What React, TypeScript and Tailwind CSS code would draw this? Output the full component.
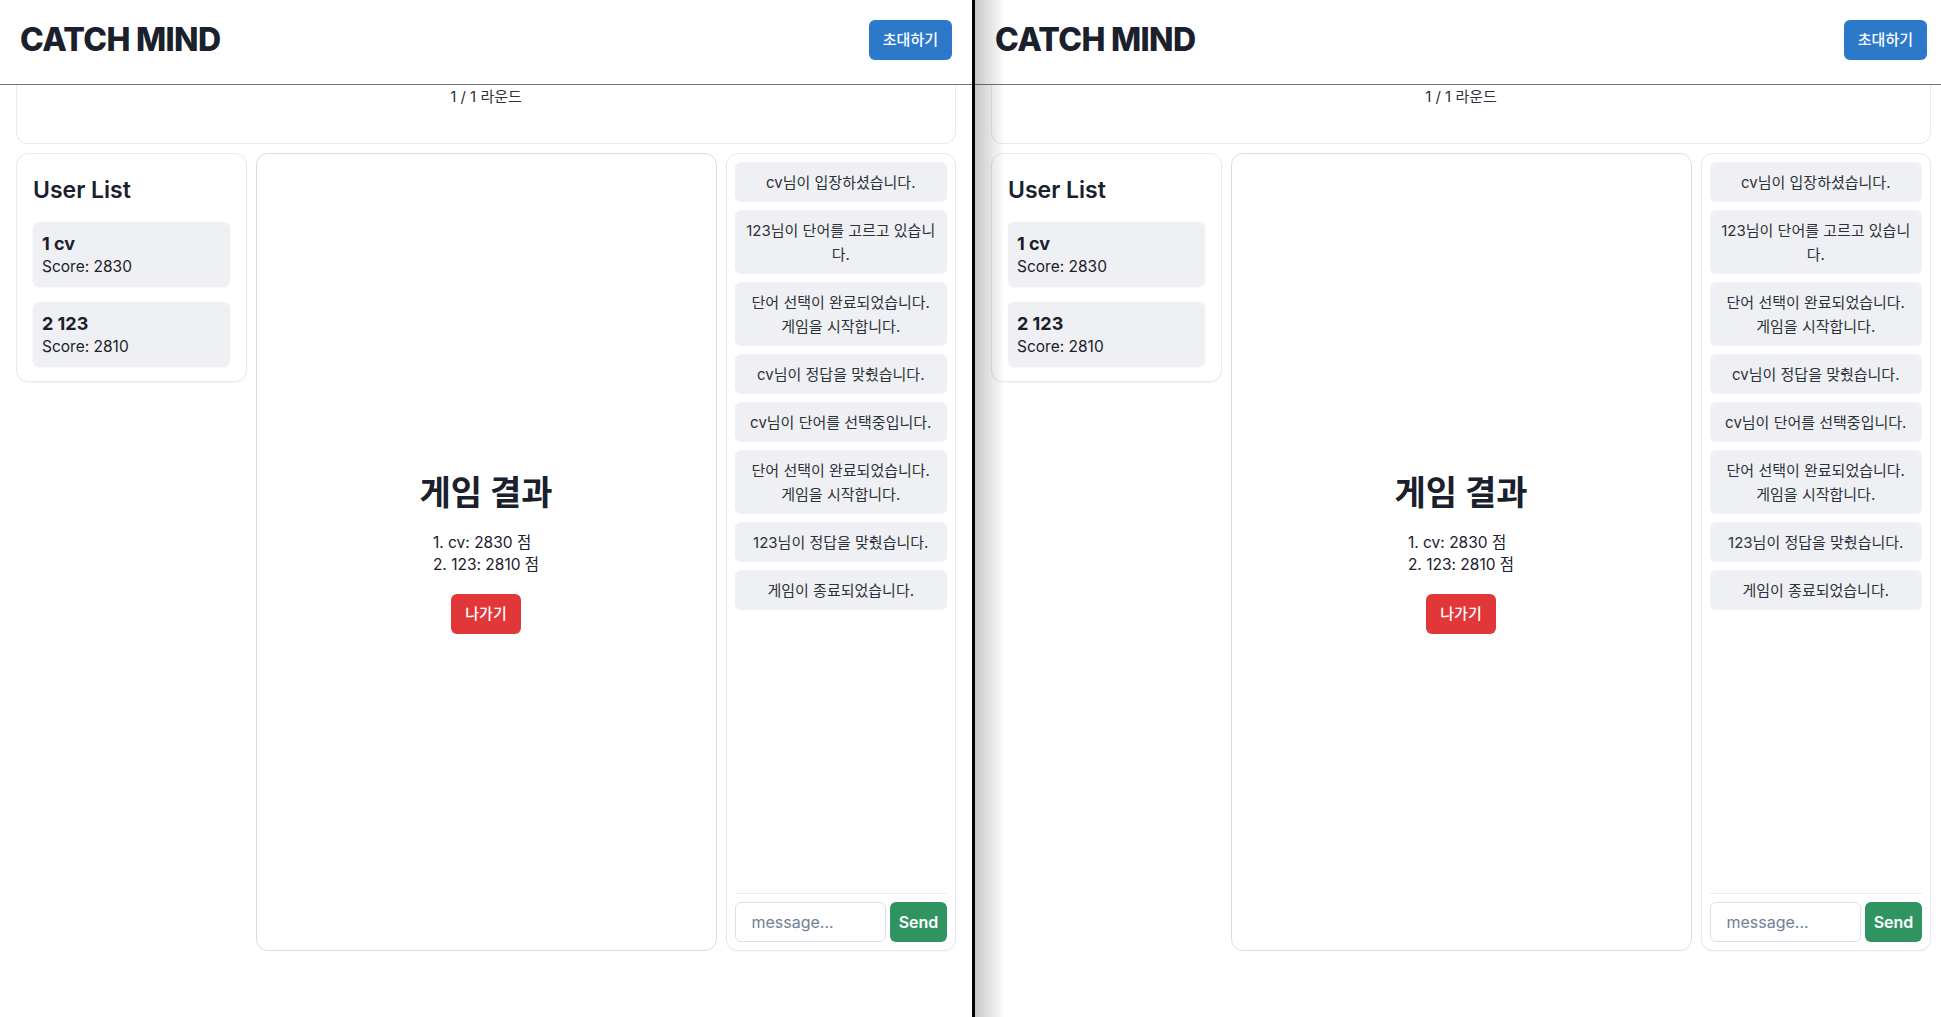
const users = [
  { rank: 1, name: "cv", score: 2830 },
  { rank: 2, name: "123", score: 2810 },
];

const messages = [
  "cv님이 입장하셨습니다.",
  "123님이 단어를 고르고 있습니다.",
  "단어 선택이 완료되었습니다. 게임을 시작합니다.",
  "cv님이 정답을 맞췄습니다.",
  "cv님이 단어를 선택중입니다.",
  "단어 선택이 완료되었습니다. 게임을 시작합니다.",
  "123님이 정답을 맞췄습니다.",
  "게임이 종료되었습니다.",
];

function UserList() {
  return (
    <div className="self-start rounded-xl border border-[#e8e9ee] bg-white px-4 pt-[20px] pb-[15px] shadow-[0_1px_2px_rgba(0,0,0,0.04)]">
      <h2 className="mb-[16px] text-[23px] leading-8 font-semibold text-[#1a202c]">User List</h2>
      <div className="flex flex-col gap-4">
        {users.map((u) => (
          <div
            key={u.rank}
            className="rounded-md bg-[#eff0f3] px-[9px] pt-[11px] pb-[7px] shadow-[0_1px_2px_rgba(0,0,0,0.08)]"
          >
            <p className="text-lg leading-[22px] font-bold text-[#1a202c]">
              {u.rank} {u.name}
            </p>
            <p className="text-[15.5px] leading-6 text-[#1a202c]">Score: {u.score}</p>
          </div>
        ))}
      </div>
    </div>
  );
}

function ResultBoard() {
  return (
    <div className="flex flex-col items-center justify-center rounded-xl border border-[#dcdde0] bg-white pt-[2px]">
      <h2 className="mb-[18px] text-[34px] leading-[42px] font-bold text-[#1a202c]">게임 결과</h2>
      <div className="text-left text-[15.5px] leading-[22px] text-[#1a202c]">
        {users.map((u) => (
          <p key={u.rank}>
            {u.rank}. {u.name}: {u.score} 점
          </p>
        ))}
      </div>
      <button className="mt-[18px] h-10 rounded-md bg-[#e23739] px-3.5 text-[15px] font-medium text-white">
        나가기
      </button>
    </div>
  );
}

function Chat() {
  return (
    <div className="flex flex-col rounded-xl border border-[#e8e9ee] bg-white p-2 shadow-[0_1px_2px_rgba(0,0,0,0.04)]">
      <div className="flex flex-1 flex-col gap-2">
        {messages.map((m, i) => (
          <div
            key={i}
            className="rounded-md bg-[#eff0f3] px-[10px] pt-[9px] pb-[7px] text-center text-[15px] leading-6 text-[#2d3139]"
          >
            {m}
          </div>
        ))}
      </div>
      <div className="mt-2 flex gap-1 border-t border-[#eceef1] pt-2">
        <input
          placeholder="message..."
          className="h-10 w-0 flex-1 rounded-md border border-[#dbe1ea] px-4 text-base text-[#1a202c] outline-none placeholder:text-[#718096]"
        />
        <button className="h-10 w-[57px] rounded-md bg-[#2f9462] text-base font-semibold text-white">
          Send
        </button>
      </div>
    </div>
  );
}

function GamePane() {
  return (
    <div className="flex h-full flex-col bg-white">
      <header className="flex h-[85px] shrink-0 items-center justify-between border-b border-[#777777] px-5 pb-1">
        <h1 className="text-[32px] leading-10 font-extrabold tracking-[-0.02em] text-[#1a202c]">CATCH MIND</h1>
        <button className="h-10 rounded-md bg-[#2c79ca] px-3.5 text-[15px] font-medium text-white">초대하기</button>
      </header>
      <div className="mx-4 h-[59px] rounded-b-xl border-x border-b border-[#e8e9ee] pt-[2px] text-center text-[15px] leading-5 text-[#2d3139]">
        1 / 1 라운드
      </div>
      <div className="mt-[9px] grid h-[798px] grid-cols-[1fr_2fr_1fr] gap-[9px] px-4">
        <UserList />
        <ResultBoard />
        <Chat />
      </div>
    </div>
  );
}

export default function App() {
  return (
    <div
      className="flex h-[1017px] w-full overflow-hidden bg-white"
      style={{ fontFamily: 'Inter, "Noto Sans CJK KR", sans-serif' }}
    >
      <div className="w-[972px] shrink-0">
        <GamePane />
      </div>
      <div className="w-[3px] shrink-0 bg-black" />
      <div className="relative w-[972px] shrink-0">
        <GamePane />
        <div className="pointer-events-none absolute top-0 left-0 h-full w-[30px] bg-gradient-to-r from-[rgba(0,0,0,0.22)] to-transparent" />
      </div>
    </div>
  );
}
